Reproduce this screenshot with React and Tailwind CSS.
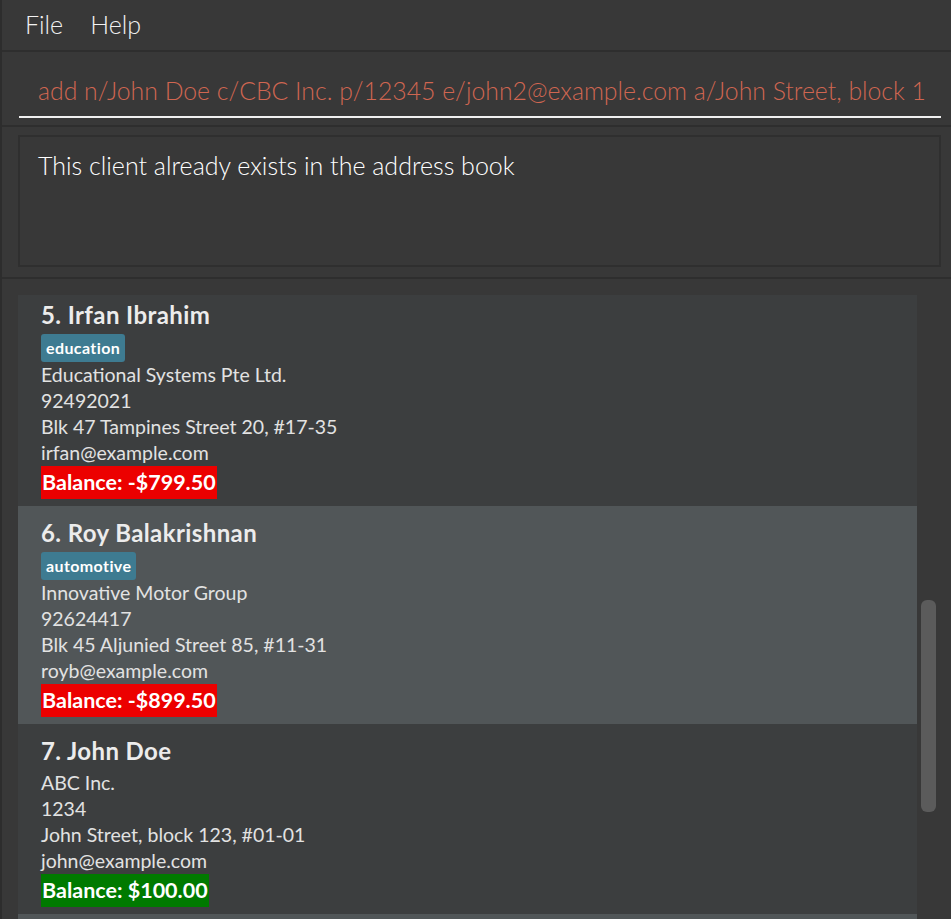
const clients = [
  {
    idx: 5,
    name: "Irfan Ibrahim",
    tags: ["education"],
    company: "Educational Systems Pte Ltd.",
    phone: "92492021",
    address: "Blk 47 Tampines Street 20, #17-35",
    email: "irfan@example.com",
    balance: "-$799.50",
    owes: true,
  },
  {
    idx: 6,
    name: "Roy Balakrishnan",
    tags: ["automotive"],
    company: "Innovative Motor Group",
    phone: "92624417",
    address: "Blk 45 Aljunied Street 85, #11-31",
    email: "royb@example.com",
    balance: "-$899.50",
    owes: true,
  },
  {
    idx: 7,
    name: "John Doe",
    tags: [],
    company: "ABC Inc.",
    phone: "1234",
    address: "John Street, block 123, #01-01",
    email: "john@example.com",
    balance: "$100.00",
    owes: false,
  },
];

function ClientCard({ client, odd }) {
  return (
    <div className={`pt-[12px] pb-[7px] pl-[23px] ${odd ? "bg-[#3c3e3f]" : "bg-[#515658]"}`}>
      <div className="text-[24px] font-bold tracking-[0.4px] leading-[30px] text-[#ececec]">
        {client.idx}. {client.name}
      </div>
      <div className="mt-[4px]">
        {client.tags.length > 0 && (
          <div className="flex gap-2 h-[28px]">
            {client.tags.map((t) => (
              <span
                key={t}
                className="h-[28px] px-[5px] rounded-[3px] bg-[#3e7b91] text-white text-[16px] font-bold tracking-[0.4px] leading-[28px]"
              >
                {t}
              </span>
            ))}
          </div>
        )}
        <div className="text-[19.5px] leading-[26px] text-[#e2e2e2]">
          <div>{client.company}</div>
          <div>{client.phone}</div>
          <div>{client.address}</div>
          <div>{client.email}</div>
        </div>
        <div className="h-[33px] flex items-center">
          <span
            className={`px-[1px] text-[21.5px] font-bold leading-[33px] text-white ${
              client.owes ? "bg-[#ec0000]" : "bg-[#007a00]"
            }`}
          >
            Balance: {client.balance}
          </span>
        </div>
      </div>
    </div>
  );
}

export default function App() {
  return (
    <div
      className="w-[951px] h-[919px] overflow-hidden bg-[#383838] border-l-2 border-[#2d2d2d] flex flex-col"
      style={{ fontFamily: "Lato, 'Open Sans', sans-serif" }}
    >
      {/* menu bar */}
      <div className="h-[52px] shrink-0 flex items-center gap-[27px] pl-[23px] border-b-2 border-[#2e2e2e] text-[25px] font-light text-[#f2f2f2]">
        <span>File</span>
        <span>Help</span>
      </div>

      {/* command box */}
      <div className="h-[75px] shrink-0 pt-[22px] pl-[17px] pr-[10px] border-b-2 border-[#2e2e2e]">
        <div className="h-[44px] border-b-2 border-[#f0f0f0] pl-[19px] text-[24.8px] font-light leading-[34px] text-[#d06651] whitespace-nowrap overflow-hidden">
          add n/John Doe c/CBC Inc. p/12345 e/john2@example.com a/John Street, block 1
        </div>
      </div>

      {/* result display */}
      <div className="h-[152px] shrink-0 pt-[8px] pl-[16px] pr-[10px] pb-[8px] border-b-2 border-[#2e2e2e]">
        <div className="h-[132px] border-2 border-[#2f2f2f] pl-[18px] pt-[11px] text-[25px] font-light leading-[34px] text-white">
          This client already exists in the address book
        </div>
      </div>

      {/* client list */}
      <div className="flex-1 flex pt-[16px] pl-[16px] min-h-0">
        <div className="w-[899px] overflow-hidden">
          <div className="-mt-[7px]">
            {clients.map((c, i) => (
              <ClientCard key={c.idx} client={c} odd={i % 2 === 0} />
            ))}
            <div className="h-[40px] bg-[#515658]" />
          </div>
        </div>
        <div className="w-[34px] pl-[4px]">
          <div className="mt-[305px] w-[15px] h-[212px] rounded-[6px] bg-[#5b5b5b]" />
        </div>
      </div>
    </div>
  );
}
